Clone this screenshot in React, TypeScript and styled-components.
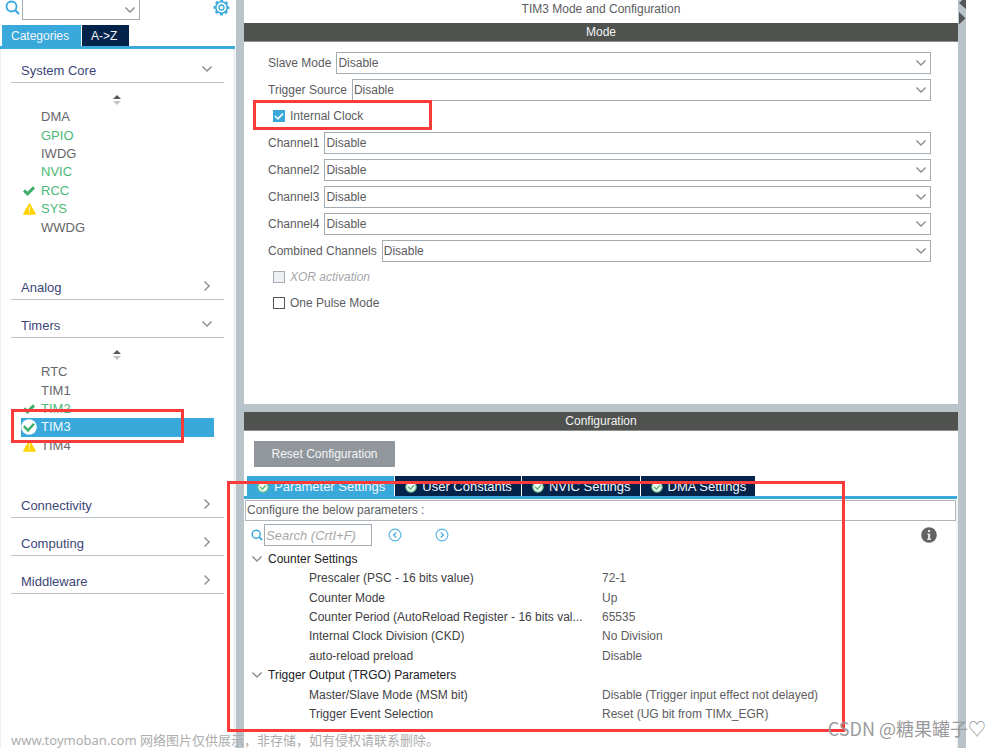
import React, { useState } from 'react';
import styled, { createGlobalStyle, css } from 'styled-components';

const Global = createGlobalStyle`
  *, *::before, *::after { box-sizing: border-box; }
  body { margin: 0; background: #fff; overflow: hidden; }
  body, button, input, select {
    font-family: "Liberation Sans", Arial, "Noto Sans CJK SC", sans-serif;
    font-size: 13px;
    line-height: 18px;
    color: #5c5c60;
  }
  button { border: 0; padding: 0; margin: 0; background: none; cursor: pointer; }
  ul { list-style: none; margin: 0; padding: 0; }
  h1, h2 { margin: 0; font: inherit; }
  svg { display: block; flex: none; }
`;

const BLUE = '#39a9dc';
const NAVY = '#03234b';
const STEEL = '#b8c4ca';
const GREEN = '#4cb877';

const Page = styled.div`
  position: relative;
  display: flex;
  height: 100vh;
  padding-right: 34px;
  overflow: hidden;
`;

const Sidebar = styled.aside`
  display: flex;
  flex-direction: column;
  width: 236px;
  flex: none;
`;

const Finder = styled.div`
  display: flex;
  align-items: flex-start;
  height: 25px;
  padding: 0 6px 0 5px;
  gap: 2px;
`;

const FinderSelect = styled.div`
  position: relative;
  width: 118px;
  height: 20px;
  margin-right: auto;
`;

const CategoryTabs = styled.div`
  display: flex;
  padding-left: 2px;
  margin-right: 1px;
  border-bottom: 3px solid ${BLUE};
`;

const CategoryTab = styled.button<{ $active?: boolean }>`
  height: 21px;
  padding: 0 12px 0 9px;
  font-size: 12px;
  color: #f2f6f9;
  background: ${p => (p.$active ? BLUE : NAVY)};
  & + & { margin-left: 1px; }
`;

const CategoryList = styled.nav`
  flex: 1;
  padding: 0 9px 0 10px;
  border-left: 1px solid #eceef0;
  border-right: 3px solid #f0f2f4;
`;

const GroupHeader = styled.button`
  display: flex;
  align-items: flex-end;
  justify-content: space-between;
  width: 100%;
  height: 34px;
  padding: 0 11px 2px 10px;
  border-bottom: 1px solid ${STEEL};
  color: #3c4678;
  svg { margin-bottom: 5px; }
`;

const Group = styled.section`
  & + & { margin-top: 4px; }
`;

const GroupBody = styled.div`
  padding-bottom: 25px;
`;

const Sorter = styled.button`
  display: flex;
  align-items: center;
  justify-content: center;
  width: 100%;
  height: 25px;
  padding: 8px 2px 0 0;
`;

const PeripheralList = styled.ul<{ $height: number }>`
  display: grid;
  grid-auto-rows: 1fr;
  height: ${p => p.$height}px;
  margin: 0 10px;
`;

type Status = 'none' | 'on' | 'ok' | 'warn' | 'current';

const Peripheral = styled.li<{ $status: Status }>`
  position: relative;
  display: grid;
  grid-template-columns: 20px 1fr;
  align-items: center;
  color: ${p => (p.$status === 'on' || p.$status === 'ok' ? GREEN : '#66666a')};
  ${p => p.$status === 'current' && css`
    background: ${BLUE};
    color: #f0f7fb;
  `}
`;

const Mark = styled.span`
  display: flex;
  justify-content: center;
  width: 16px;
`;

const Splitter = styled.div`
  width: 8px;
  flex: none;
  background: ${STEEL};
`;

const Main = styled.main`
  display: flex;
  flex-direction: column;
  flex: 1;
  min-width: 0;
  font-size: 12px;
  select { font-size: 12px; }
`;

const Title = styled.h1`
  height: 23px;
  text-align: center;
`;

const Bar = styled.h2`
  height: 19px;
  text-align: center;
  color: #f4f4f4;
  background: #4f524f;
  border-bottom: 1px solid #8c8e8c;
  line-height: 19px;
`;

const ModePane = styled.section`
  height: 362px;
  flex: none;
  padding: 7px 27px 0 24px;
`;

const Field = styled.div`
  display: flex;
  align-items: center;
  gap: 5px;
  height: 27px;
`;

const SelectWrap = styled.div`
  position: relative;
  flex: 1;
  height: 22px;
`;

const Select = styled.select`
  appearance: none;
  display: block;
  width: 100%;
  height: 100%;
  padding: 0 20px 0 1px;
  border: 1px solid #a3acb3;
  border-radius: 0;
  background: #fff;
`;

const FinderInput = styled(Select)`
  border-top: 0;
`;

const SelectArrow = styled.span`
  position: absolute;
  top: 50%;
  right: 4px;
  transform: translateY(-50%);
  pointer-events: none;
`;

const CheckRow = styled.div<{ $muted?: boolean }>`
  position: relative;
  display: flex;
  align-items: center;
  height: 26px;
  padding-left: 5px;
  gap: 5px;
  ${p => p.$muted && css`
    color: #a6a6a8;
    font-style: italic;
  `}
`;

const Check = styled.input`
  appearance: none;
  width: 12px;
  height: 12px;
  margin: 0;
  border: 1px solid #55555a;
  background: #fff;
  &:disabled { border-color: #a3acb3; background: #eff0f3; }
  &:checked {
    border-color: ${BLUE};
    background: ${BLUE} url("data:image/svg+xml,%3Csvg xmlns='http://www.w3.org/2000/svg' viewBox='0 0 10 10'%3E%3Cpath d='M1 5l2.900 2.900L9 2.600' fill='none' stroke='white' stroke-width='1.600'/%3E%3C/svg%3E");
  }
`;

const Divider = styled.div`
  height: 8px;
  flex: none;
  background: ${STEEL};
`;

const ConfigPane = styled.section`
  position: relative;
  flex: 1;
  display: flex;
  flex-direction: column;
`;

const ResetButton = styled.button`
  width: 141px;
  height: 26px;
  margin: 10px 0 9px 10px;
  font-size: 12px;
  color: #f4f5f6;
  background: #91979d;
`;

const ConfigTabs = styled.div`
  display: flex;
  gap: 1px;
  height: 23px;
  padding-left: 3px;
  margin-right: 1px;
  border-bottom: 3px solid ${BLUE};
`;

const ConfigTab = styled.button<{ $active?: boolean }>`
  display: flex;
  align-items: center;
  gap: 5px;
  padding: 2px 9px 0 10px;
  color: #f2f6f9;
  background: ${p => (p.$active ? BLUE : NAVY)};
`;

const ConfigBody = styled.div`
  flex: 1;
  padding: 1px 0 0 1px;
  border-right: 2px solid #f0f2f4;
`;

const Hint = styled.p`
  height: 21px;
  margin: 0;
  padding-left: 1px;
  border: 1px solid #b0b6bb;
  line-height: 19px;
`;

const SearchRow = styled.div`
  display: flex;
  align-items: center;
  height: 28px;
  padding: 0 19px 0 6px;
`;

const SearchInput = styled.input`
  width: 108px;
  height: 22px;
  margin: 0 16px 0 1px;
  padding: 0 1px;
  border: 1px solid #a3acb3;
  outline: 0;
  &::placeholder { color: #a8a8aa; opacity: 1; font-style: italic; }
`;

const StepButton = styled.button`
  & + & { margin-left: 33px; }
`;

const InfoButton = styled.button`
  margin-left: auto;
`;

const Params = styled.table`
  width: 100%;
  height: 175px;
  table-layout: fixed;
  border-collapse: collapse;
  th, td { padding: 0; text-align: left; font-weight: normal; white-space: nowrap; line-height: 18px; }
  td { color: #5c5c60; }
`;

const NameColumn = styled.col`
  width: 357px;
`;

const ParamName = styled.th`
  && { padding-left: 64px; }
  color: #404044;
`;

const ParamGroup = styled.button`
  display: flex;
  align-items: center;
  gap: 5px;
  padding-left: 6px;
  font-size: 12px;
  color: #222226;
`;

const Outline = styled.span<{ $box: [number, number, number, number] }>`
  position: absolute;
  z-index: 2;
  left: ${p => p.$box[0]}px;
  top: ${p => p.$box[1]}px;
  width: ${p => p.$box[2]}px;
  height: ${p => p.$box[3]}px;
  border: 3px solid #fb3a3a;
  pointer-events: none;
`;

const SiteNote = styled.div`
  position: absolute;
  left: 11px;
  bottom: -2px;
  z-index: 3;
  font: 13px/20px "Noto Sans", "Noto Sans CJK SC", sans-serif;
  color: #adadad;
  white-space: nowrap;
`;

const Signature = styled.div`
  position: absolute;
  right: 14px;
  bottom: 8px;
  z-index: 3;
  font: 18px/24px "Noto Sans CJK SC", sans-serif;
  color: #9a9a9c;
  white-space: nowrap;
`;

const Chevron = ({ dir = 'down' }: { dir?: 'down' | 'right' }) => (
  <svg width="12" height="12" viewBox="0 0 12 12" fill="none" stroke="#8e8e90" strokeWidth="1.4">
    <path d={dir === 'down' ? 'M1.400 3.500l4.600 4.600 4.600-4.600' : 'M3.500 1.400l4.600 4.600-4.600 4.600'} />
  </svg>
);

const Magnifier = ({ size }: { size: number }) => (
  <svg width={size} height={size} viewBox="0 0 15 15" fill="none" stroke={BLUE} strokeWidth="1.8">
    <circle cx="6.5" cy="6.5" r="5" />
    <path d="M10.2 10.2L14 14" strokeWidth="2.2" />
  </svg>
);

const Gear = () => (
  <svg width="17" height="16" viewBox="0 0 17 16" fill="none" stroke={BLUE}>
    <circle cx="8.5" cy="7.5" r="5.700" strokeWidth="1.6" />
    <circle cx="8.5" cy="7.5" r="7" strokeWidth="1.8" strokeDasharray="2.900 2.598" strokeDashoffset="1.450" />
    <circle cx="8.5" cy="7.5" r="2.5" strokeWidth="1.3" />
  </svg>
);

const SortIcon = () => (
  <svg width="8" height="10" viewBox="0 0 8 10">
    <path d="M0 4l4-4 4 4z" fill="#58585a" />
    <path d="M0 6h8l-4 4z" fill="#c4c4c6" />
  </svg>
);

const Tick = () => (
  <svg width="12" height="10" viewBox="0 0 12 10" fill="none" stroke="#3fae6a" strokeWidth="3">
    <path d="M1 4.400l3.500 3.400L11 1.400" />
  </svg>
);

const Warning = () => (
  <svg width="13" height="12" viewBox="0 0 13 12">
    <path d="M6.5 1L12.2 11H.8z" fill="#ffd200" stroke="#ffd200" strokeWidth="1.4" strokeLinejoin="round" />
    <path d="M6.5 4v3.6M6.5 8.8v1.3" stroke="#fff8d8" strokeWidth="1.2" />
  </svg>
);

const RoundTick = ({ size }: { size: number }) => (
  <svg width={size} height={size} viewBox="0 0 16 16" fill="none">
    <circle cx="8" cy="8" r="7.8" fill="#fff" />
    <path d="M2.800 7.200l4.200 4.200 6-6.600" stroke="#3fae6a" strokeWidth="2.4" />
  </svg>
);

const TabTick = () => (
  <svg width="12" height="12" viewBox="0 0 12 12" fill="none">
    <circle cx="6" cy="6" r="5.2" fill="#f1faf3" stroke="#6cc08a" strokeWidth="1.2" />
    <path d="M3 5.6l2.4 2.6L9 4.2" stroke="#5cb97f" strokeWidth="1.4" />
  </svg>
);

const Step = ({ dir }: { dir: 'back' | 'next' }) => (
  <svg width="14" height="14" viewBox="0 0 14 14" fill="none" stroke="#52b4e0" strokeWidth="1.1">
    <circle cx="7" cy="7" r="5.9" />
    <path d={dir === 'back' ? 'M8.2 4.4L5.6 7l2.6 2.6' : 'M5.8 4.4L8.4 7l-2.6 2.6'} strokeWidth="1.4" />
  </svg>
);

const Info = () => (
  <svg width="16" height="16" viewBox="0 0 16 16">
    <circle cx="8" cy="8" r="7.8" fill="#636365" />
    <path d="M7 3h2.2v2H7zM6.2 6.4h3v5.4h.8v1.2H6.2v-1.2H7V7.6h-.8z" fill="#e4e4e4" />
  </svg>
);

const CollapseArrows = () => (
  <svg width="8" height="26" viewBox="0 0 8 26" fill="#55565a">
    <path d="M8-3v12L1 3z" />
    <path d="M1 12v12.500L7.500 18.200z" />
  </svg>
);

const marks: Record<Status, React.ReactNode> = {
  none: null,
  on: null,
  ok: <Tick />,
  warn: <Warning />,
  current: <RoundTick size={16} />,
};

type Item = { name: string; status: Status; green?: boolean };

const systemCore: Item[] = [
  { name: 'DMA', status: 'none' },
  { name: 'GPIO', status: 'on' },
  { name: 'IWDG', status: 'none' },
  { name: 'NVIC', status: 'on' },
  { name: 'RCC', status: 'ok' },
  { name: 'SYS', status: 'warn', green: true },
  { name: 'WWDG', status: 'none' },
];

const timers: Item[] = [
  { name: 'RTC', status: 'none' },
  { name: 'TIM1', status: 'none' },
  { name: 'TIM2', status: 'ok' },
  { name: 'TIM3', status: 'current' },
  { name: 'TIM4', status: 'warn' },
];

const GreenText = styled.span`
  color: ${GREEN};
`;

function CategoryGroup({ title, items, height = 0 }: { title: string; items?: Item[]; height?: number }) {
  return (
    <Group>
      <GroupHeader aria-expanded={!!items}>
        {title}
        <Chevron dir={items ? 'down' : 'right'} />
      </GroupHeader>
      {items && (
        <GroupBody>
          <Sorter aria-label={`Sort ${title}`}><SortIcon /></Sorter>
          <PeripheralList $height={height}>
            {items.map(i => (
              <Peripheral key={i.name} $status={i.status}>
                <Mark>{marks[i.status]}</Mark>
                {i.green ? <GreenText>{i.name}</GreenText> : i.name}
                {i.status === 'current' && <Outline $box={[-10, -9, 173, 34]} />}
              </Peripheral>
            ))}
          </PeripheralList>
        </GroupBody>
      )}
    </Group>
  );
}

function SelectField({ label }: { label: string }) {
  const id = label.replace(/\s/g, '-');
  return (
    <Field>
      <label htmlFor={id}>{label}</label>
      <SelectWrap>
        <Select id={id}><option>Disable</option></Select>
        <SelectArrow><Chevron /></SelectArrow>
      </SelectWrap>
    </Field>
  );
}

const params: { group: string; rows: [string, string][] }[] = [
  {
    group: 'Counter Settings',
    rows: [
      ['Prescaler (PSC - 16 bits value)', '72-1'],
      ['Counter Mode', 'Up'],
      ['Counter Period (AutoReload Register - 16 bits val...', '65535'],
      ['Internal Clock Division (CKD)', 'No Division'],
      ['auto-reload preload', 'Disable'],
    ],
  },
  {
    group: 'Trigger Output (TRGO) Parameters',
    rows: [
      ['Master/Slave Mode (MSM bit)', 'Disable (Trigger input effect not delayed)'],
      ['Trigger Event Selection', 'Reset (UG bit from TIMx_EGR)'],
    ],
  },
];

export default function App() {
  const [internalClock, setInternalClock] = useState(true);
  const [onePulse, setOnePulse] = useState(false);
  return (
    <Page>
      <Global />
      <Sidebar>
        <Finder>
          <Magnifier size={15} />
          <FinderSelect>
            <FinderInput aria-label="Find peripheral"><option></option></FinderInput>
            <SelectArrow><Chevron /></SelectArrow>
          </FinderSelect>
          <button aria-label="Settings"><Gear /></button>
        </Finder>
        <CategoryTabs>
          <CategoryTab $active>Categories</CategoryTab>
          <CategoryTab>{'A->Z'}</CategoryTab>
        </CategoryTabs>
        <CategoryList>
          <CategoryGroup title="System Core" items={systemCore} height={129} />
          <CategoryGroup title="Analog" />
          <CategoryGroup title="Timers" items={timers} height={92} />
          <CategoryGroup title="Connectivity" />
          <CategoryGroup title="Computing" />
          <CategoryGroup title="Middleware" />
        </CategoryList>
      </Sidebar>
      <Splitter />
      <Main>
        <Title>TIM3 Mode and Configuration</Title>
        <Bar>Mode</Bar>
        <ModePane>
          <SelectField label="Slave Mode" />
          <SelectField label="Trigger Source" />
          <CheckRow>
            <Check type="checkbox" id="internal-clock" checked={internalClock} onChange={e => setInternalClock(e.target.checked)} />
            <label htmlFor="internal-clock">Internal Clock</label>
            <Outline $box={[-15, -3, 179, 30]} />
          </CheckRow>
          <SelectField label="Channel1" />
          <SelectField label="Channel2" />
          <SelectField label="Channel3" />
          <SelectField label="Channel4" />
          <SelectField label="Combined Channels" />
          <CheckRow $muted>
            <Check type="checkbox" id="xor" disabled />
            <label htmlFor="xor">XOR activation</label>
          </CheckRow>
          <CheckRow>
            <Check type="checkbox" id="one-pulse" checked={onePulse} onChange={e => setOnePulse(e.target.checked)} />
            <label htmlFor="one-pulse">One Pulse Mode</label>
          </CheckRow>
        </ModePane>
        <Divider />
        <ConfigPane>
          <Bar>Configuration</Bar>
          <ResetButton>Reset Configuration</ResetButton>
          <ConfigTabs>
            <ConfigTab $active><TabTick />Parameter Settings</ConfigTab>
            <ConfigTab><TabTick />User Constants</ConfigTab>
            <ConfigTab><TabTick />NVIC Settings</ConfigTab>
            <ConfigTab><TabTick />DMA Settings</ConfigTab>
          </ConfigTabs>
          <ConfigBody>
            <Hint>Configure the below parameters :</Hint>
            <SearchRow>
              <Magnifier size={12} />
              <SearchInput aria-label="Search parameters" placeholder="Search (CrtI+F)" />
              <StepButton aria-label="Previous match"><Step dir="back" /></StepButton>
              <StepButton aria-label="Next match"><Step dir="next" /></StepButton>
              <InfoButton aria-label="Information"><Info /></InfoButton>
            </SearchRow>
            <Params>
              <colgroup><NameColumn /><col /></colgroup>
              {params.map(p => (
                <tbody key={p.group}>
                  <tr>
                    <th colSpan={2} scope="rowgroup">
                      <ParamGroup aria-expanded="true"><Chevron />{p.group}</ParamGroup>
                    </th>
                  </tr>
                  {p.rows.map(([name, value]) => (
                    <tr key={name}>
                      <ParamName scope="row">{name}</ParamName>
                      <td>{value}</td>
                    </tr>
                  ))}
                </tbody>
              ))}
            </Params>
          </ConfigBody>
          <Outline $box={[-17, 69, 618, 251]} />
        </ConfigPane>
      </Main>
      <Splitter><CollapseArrows /></Splitter>
      <SiteNote>www.toymoban.com 网络图片仅供展示，非存储，如有侵权请联系删除。</SiteNote>
      <Signature>CSDN @糖果罐子♡</Signature>
    </Page>
  );
}
